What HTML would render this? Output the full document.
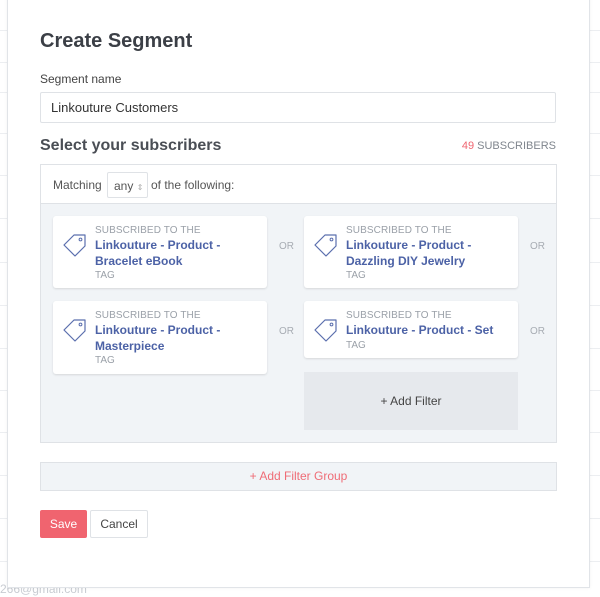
<!DOCTYPE html>
<html><head><style>
*{box-sizing:border-box;margin:0;padding:0}
body{width:600px;height:597px;overflow:hidden;background:#fff;font-family:"Liberation Sans",sans-serif;position:relative;color:#3d4148}
.bgl{position:absolute;left:0;width:600px;height:1px;background:#eceef1}
.bgt{position:absolute;font-size:11px;color:#c8ccd2}
.modal{position:absolute;left:7px;top:-5px;width:583px;height:593px;background:#fff;border:1px solid #e1e4e8;box-shadow:0 0 3px rgba(0,0,0,.06)}
.abs{position:absolute}
h1{position:absolute;left:40px;top:30px;font-size:20px;font-weight:bold;color:#3b3f46}
.card{position:absolute;background:#fff;border-radius:3px;box-shadow:0 1px 2px rgba(0,0,0,.12);width:214px}
.card .s{position:absolute;left:42px;top:9px;font-size:10px;color:#9aa0a8;letter-spacing:.1px}
.card .t{position:absolute;left:42px;top:22px;font-size:12px;font-weight:bold;color:#4c62a6;line-height:15.5px;width:165px}
.card .g{position:absolute;left:42px;font-size:10px;color:#9aa0a8}
.card svg{position:absolute;left:9px;top:16px}
.or{position:absolute;font-size:10px;color:#a7acb3}
</style></head><body>
<div class="bgl" style="top:30px"></div><div class="bgl" style="top:62px"></div>
<div class="bgl" style="top:92px"></div><div class="bgl" style="top:133px"></div>
<div class="bgl" style="top:175px"></div><div class="bgl" style="top:218px"></div>
<div class="bgl" style="top:262px"></div><div class="bgl" style="top:305px"></div>
<div class="bgl" style="top:348px"></div><div class="bgl" style="top:390px"></div>
<div class="bgl" style="top:432px"></div><div class="bgl" style="top:475px"></div>
<div class="bgl" style="top:518px"></div><div class="bgl" style="top:561px"></div>
<div class="bgt" style="left:0;top:582px;font-size:12px">266@gmail.com</div>
<div class="modal"></div>
<h1>Create Segment</h1>
<div class="abs" style="left:40px;top:72px;font-size:12px;color:#444">Segment name</div>
<div class="abs" style="left:40px;top:92px;width:516px;height:31px;border:1px solid #dfe2e6;border-radius:2px;font-size:13px;padding:7px 10px;color:#333">Linkouture Customers</div>
<div class="abs" style="left:40px;top:137px;font-size:16px;font-weight:bold;color:#4a4e55">Select your subscribers</div>
<div class="abs" style="right:44px;top:140px;font-size:11px;color:#7f858d"><span style="color:#ef6470">49</span> SUBSCRIBERS</div>
<div class="abs" style="left:40px;top:164px;width:517px;height:279px;border:1px solid #dfe2e6;background:#f1f4f7">
 <div style="height:39px;background:#fff;border-bottom:1px solid #dfe2e6;position:relative;font-size:12px;color:#555">
  <span class="abs" style="left:12px;top:13px">Matching</span>
  <span class="abs" style="left:66px;top:7px;width:41px;height:26px;border:1px solid #dfe2e6;border-radius:2px;padding:6px 0 0 6px">any <span style="font-size:8px;color:#aaa">⇕</span></span>
  <span class="abs" style="left:110px;top:13px">of the following:</span>
 </div>
</div>
<svg width="0" height="0" style="position:absolute"><defs><g id="tag"><path d="M2 12 L12 2 L23 2 L23 13 L13 23 Z" fill="none" stroke="#5b6fae" stroke-width="1.2" stroke-linejoin="round"/><circle cx="18.5" cy="6.5" r="1.4" fill="none" stroke="#5b6fae" stroke-width="1"/></g></defs></svg>
<div class="card" style="left:53px;top:216px;height:72px"><svg width="26" height="26" style="top:17px"><use href="#tag"/></svg><div class="s">SUBSCRIBED TO THE</div><div class="t">Linkouture - Product - Bracelet eBook</div><div class="g" style="top:54px">TAG</div></div>
<div class="card" style="left:304px;top:216px;height:72px"><svg width="26" height="26" style="top:17px"><use href="#tag"/></svg><div class="s">SUBSCRIBED TO THE</div><div class="t">Linkouture - Product - Dazzling DIY Jewelry</div><div class="g" style="top:54px">TAG</div></div>
<div class="card" style="left:53px;top:301px;height:73px"><svg width="26" height="26" style="top:17px"><use href="#tag"/></svg><div class="s">SUBSCRIBED TO THE</div><div class="t">Linkouture - Product - Masterpiece</div><div class="g" style="top:54px">TAG</div></div>
<div class="card" style="left:304px;top:301px;height:57px"><svg width="26" height="26" style="top:17px"><use href="#tag"/></svg><div class="s">SUBSCRIBED TO THE</div><div class="t">Linkouture - Product - Set</div><div class="g" style="top:39px">TAG</div></div>
<div class="or" style="left:279px;top:241px">OR</div><div class="or" style="left:530px;top:241px">OR</div>
<div class="or" style="left:279px;top:326px">OR</div><div class="or" style="left:530px;top:326px">OR</div>
<div class="abs" style="left:304px;top:372px;width:214px;height:58px;background:#e6e9ed;font-size:12px;color:#444;text-align:center;line-height:58px">+ Add Filter</div>
<div class="abs" style="left:40px;top:462px;width:517px;height:29px;background:#f1f4f7;border:1px solid #dfe2e6;font-size:12px;color:#ef6c76;text-align:center;line-height:27px">+ Add Filter Group</div>
<div class="abs" style="left:40px;top:510px;width:47px;height:28px;background:#f0646f;border-radius:2px;color:#fff;font-size:12px;text-align:center;line-height:28px">Save</div>
<div class="abs" style="left:90px;top:510px;width:58px;height:28px;border:1px solid #dfe2e6;border-radius:2px;color:#444;font-size:12px;text-align:center;line-height:26px">Cancel</div>
</body></html>
